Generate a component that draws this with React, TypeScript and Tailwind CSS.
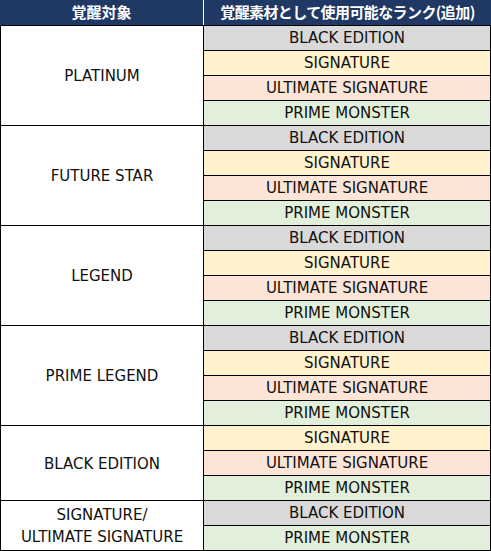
const rowBg: Record<string, string> = {
  "BLACK EDITION": "bg-[#d9d9d9]",
  SIGNATURE: "bg-[#fff2cc]",
  "ULTIMATE SIGNATURE": "bg-[#fce4d6]",
  "PRIME MONSTER": "bg-[#e2efda]",
};

const groups = [
  { target: ["PLATINUM"], ranks: ["BLACK EDITION", "SIGNATURE", "ULTIMATE SIGNATURE", "PRIME MONSTER"] },
  { target: ["FUTURE STAR"], ranks: ["BLACK EDITION", "SIGNATURE", "ULTIMATE SIGNATURE", "PRIME MONSTER"] },
  { target: ["LEGEND"], ranks: ["BLACK EDITION", "SIGNATURE", "ULTIMATE SIGNATURE", "PRIME MONSTER"] },
  { target: ["PRIME LEGEND"], ranks: ["BLACK EDITION", "SIGNATURE", "ULTIMATE SIGNATURE", "PRIME MONSTER"] },
  { target: ["BLACK EDITION"], ranks: ["SIGNATURE", "ULTIMATE SIGNATURE", "PRIME MONSTER"] },
  { target: ["SIGNATURE/", "ULTIMATE SIGNATURE"], ranks: ["BLACK EDITION", "PRIME MONSTER"] },
];

const App = () => {
  return (
    <div className="w-[491px] bg-white font-['DejaVu_Sans',sans-serif] text-[15px] text-[#111]">
      <div className="flex h-[25px] bg-[#1f3864] font-['Noto_Sans_CJK_JP',sans-serif] text-[15px] font-bold text-white">
        <div className="flex w-[204px] items-center justify-center border-r border-white">覚醒対象</div>
        <div className="flex flex-1 items-center justify-center tracking-[-0.6px]">覚醒素材として使用可能なランク(追加)</div>
      </div>
      <div className="border-x border-b border-black">
        {groups.map((g, i) => (
          <div key={i} className="flex border-t border-black">
            <div className="flex w-[203px] flex-col items-center justify-center border-r border-black pt-px leading-[22px]">
              {g.target.map((t) => (
                <span key={t}>{t}</span>
              ))}
            </div>
            <div className="flex-1">
              {g.ranks.map((r, j) => (
                <div
                  key={r}
                  className={`flex items-center justify-center pt-px ${j > 0 ? "h-[25px] border-t border-black" : "h-[24px]"} ${rowBg[r]}`}
                >
                  {r}
                </div>
              ))}
            </div>
          </div>
        ))}
      </div>
    </div>
  );
};

export default App;
